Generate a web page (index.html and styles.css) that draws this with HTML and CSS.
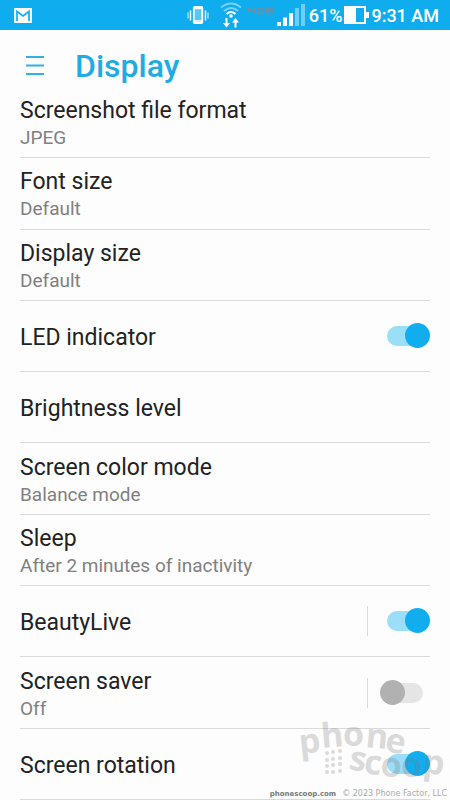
FILE: index.html
```html
<!DOCTYPE html>
<html lang="en">
<head>
<meta charset="utf-8">
<meta name="viewport" content="width=device-width, initial-scale=1">
<title>Display</title>
<link rel="stylesheet" href="styles.css">
</head>
<body>
<div class="status">
  <svg class="mail" width="18" height="15" viewBox="0 0 18 15"><rect width="18" height="15" rx="1" fill="#fff"/><path d="M3 13V3.500l6 4.500 6-4.500V13" fill="none" stroke="#12adee" stroke-width="1.700"/></svg>
  <div class="tray">
    <svg width="122" height="30" viewBox="184 0 122 30">
      <rect x="192.800" y="7" width="8.500" height="16" rx="1" fill="#5cc6f2" stroke="#fff" stroke-width="1.800"/>
      <path d="M193 8.500h8M193 21h8" stroke="#fff" stroke-width="1.500"/>
      <g fill="none" stroke="#fff">
        <path d="M189.500 10.500v10M204.500 10.500v10" stroke-width="1.500"/>
        <path d="M187 12.500v6M207 12.500v6" stroke-width="1.500" opacity=".6"/>
        <path d="M220 7.500q10-8 20 0M223 11q7-6 14 0" stroke-width="2" opacity=".45"/>
        <path d="M225.500 14q4.500-4 9 0" stroke-width="2"/>
      </g>
      <circle cx="230" cy="16" r="1.800" fill="#fff"/>
      <path d="M224.500 18h2v5h2.500l-3.500 4.500-3.500-4.500h2.500zM233.500 27.500h2v-5h2.500l-3.500-4.500-3.500 4.500h2.500z" fill="#fff"/>
      <path d="M247.500 7v4h7.500M253.500 7v7M263 8h-6v5.500h5.500V11H260M272 8h-6v5.500h6M266 10.800h6" fill="none" stroke="#778b9b" stroke-width="1.600"/>
      <path d="M276 22h4v4h-4zM282 17.500h4V26h-4zM288 13h4v13h-4z" fill="#fff"/>
      <path d="M294 8h4v18h-4zM300 4h4v22h-4z" fill="#fff" opacity=".4"/>
    </svg>
    <span>61%</span>
    <svg width="25" height="18" viewBox="0 0 25 18"><path d="M1 1h20v16H1z" fill="none" stroke="#fff" stroke-width="2"/><path d="M1 1h11v16H1zM22 6h3v6h-3z" fill="#fff"/></svg>
    <span>9:31 AM</span>
  </div>
</div>
<header class="bar">
  <button class="menu" aria-label="Menu"><svg width="18" height="19" viewBox="0 0 18 19"><path d="M0 1h18M0 9.500h18M0 18h18" stroke="#35b0e2" stroke-width="2"/></svg></button>
  <h1>Display</h1>
</header>
<main class="list">
  <div class="row"><div class="text"><div class="name">Screenshot file format</div><div class="value">JPEG</div></div></div>
  <div class="row"><div class="text"><div class="name">Font size</div><div class="value">Default</div></div></div>
  <div class="row"><div class="text"><div class="name">Display size</div><div class="value">Default</div></div></div>
  <div class="row"><label class="name" for="led">LED indicator</label><div class="control"><input class="switch" id="led" type="checkbox" checked></div></div>
  <div class="row"><div class="name">Brightness level</div></div>
  <div class="row"><div class="text"><div class="name">Screen color mode</div><div class="value">Balance mode</div></div></div>
  <div class="row"><div class="text"><div class="name">Sleep</div><div class="value">After 2 minutes of inactivity</div></div></div>
  <div class="row"><label class="name" for="beauty">BeautyLive</label><div class="control split"><input class="switch" id="beauty" type="checkbox" checked></div></div>
  <div class="row"><label class="text" for="saver"><span class="name">Screen saver</span><span class="value">Off</span></label><div class="control split"><input class="switch" id="saver" type="checkbox"></div></div>
  <div class="row"><label class="name" for="rotation">Screen rotation</label><div class="control"><input class="switch" id="rotation" type="checkbox" checked></div></div>
</main>
<div class="watermark">
  <svg width="150" height="72" viewBox="0 0 150 72">
    <g class="letters">
      <text x="0 22 43 65 84" y="39 33 31 32 36" rotate="-6 -5 0 5 10">phone</text>
      <text x="48 63 80 101 122" y="54 58 61 62 58" rotate="10 8 4 0 6">scoop</text>
    </g>
    <g fill="#777"><circle cx="27" cy="38" r="2"/><circle cx="33" cy="37" r="2"/><circle cx="40" cy="36" r="2"/><circle cx="27" cy="45" r="2"/><circle cx="33" cy="44" r="2"/><circle cx="40" cy="43" r="2"/><circle cx="27" cy="51" r="2"/><circle cx="33" cy="50" r="2"/><circle cx="40" cy="49" r="2"/><circle cx="27" cy="57" r="2"/><circle cx="33" cy="57" r="2"/><circle cx="40" cy="56" r="2"/></g>
  </svg>
</div>
<footer class="credit"><b>phonescoop.com</b><span>© 2023 Phone Factor, LLC</span></footer>
</body>
</html>
```

FILE: styles.css
```css
* { box-sizing: border-box; }
body {
  margin: 0;
  min-height: 100vh;
  display: flex;
  flex-direction: column;
  position: relative;
  background: #fdfdfd;
  color: #222;
  font-family: Roboto, sans-serif;
}
.status {
  height: 30px;
  padding: 0 11px 0 14px;
  display: flex;
  align-items: center;
  justify-content: space-between;
  background: #0fadee;
  color: #fff;
  font-size: 18px;
  font-weight: 500;
}
.tray { display: flex; align-items: center; gap: 2px; }
.tray span { padding-top: 2px; line-height: 28px; }
.bar {
  height: 57px;
  padding: 14px 26px 0;
  display: flex;
  align-items: center;
  gap: 31px;
}
.menu { padding: 0; border: 0; background: none; line-height: 0; }
h1 { margin: 0; font-size: 32px; line-height: 40px; font-weight: 500; color: #1fabe3; }
.list { flex: 1; display: flex; flex-direction: column; padding: 0 20px; }
.row {
  flex: 1 0 71px;
  display: flex;
  align-items: center;
  justify-content: space-between;
  border-bottom: 1px solid #dadada;
}
.name { display: block; padding-top: 4px; font-size: 23px; line-height: 28px; }
.value { display: block; font-size: 19px; line-height: 26px; color: #808080; }
.control { display: flex; align-items: center; height: 30px; padding-left: 12px; }
.split { border-left: 1px solid #dadada; }
.switch {
  appearance: none;
  position: relative;
  margin: 0;
  width: 50px;
  height: 26px;
  padding: 3px 7px;
}
.switch::before {
  content: "";
  display: block;
  height: 20px;
  border-radius: 10px;
  background: #e5e5e5;
}
.switch::after {
  content: "";
  position: absolute;
  top: 0;
  left: 0;
  width: 25px;
  height: 25px;
  border-radius: 50%;
  background: #b1b1b1;
}
.switch:checked::before { background: #9bdef7; }
.switch:checked::after { left: auto; right: 0; background: #12adee; }
.watermark { position: absolute; right: 0; bottom: 13px; line-height: 0; opacity: .25; pointer-events: none; }
.letters { font: bold 34px "Open Sans", sans-serif; fill: #777; }
.credit {
  position: absolute;
  right: 3px;
  bottom: 0;
  display: flex;
  gap: 6px;
  font: 8px/12px "DejaVu Sans", sans-serif;
  color: #aaa;
}
.credit b { font-size: 7px; color: #777; }
```
